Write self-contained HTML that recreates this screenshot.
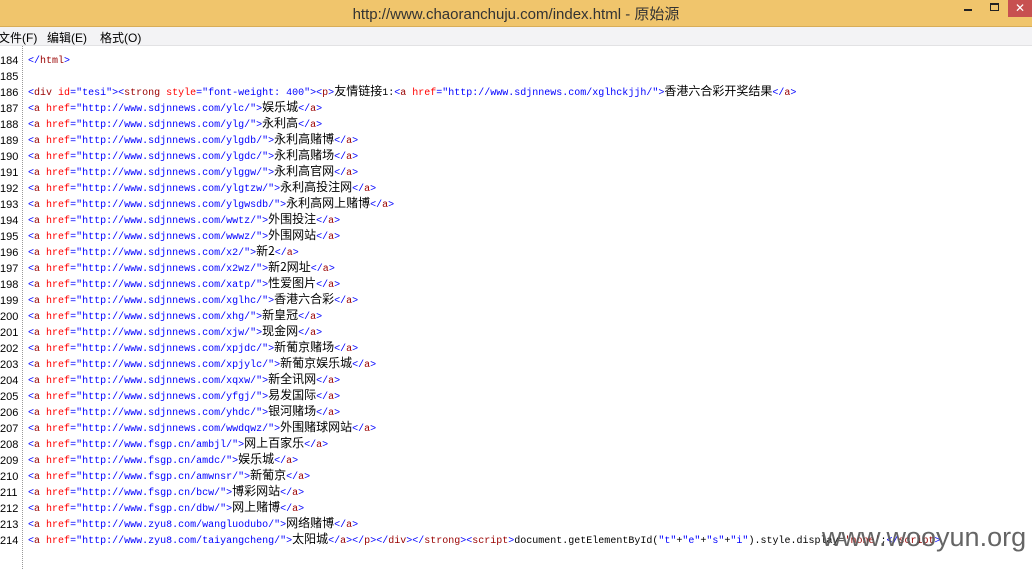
<!DOCTYPE html>
<html><head><meta charset="utf-8"><style>
body{margin:0;width:1032px;height:569px;overflow:hidden;background:#fff;position:relative;font-family:"Liberation Sans","Noto Sans CJK SC",sans-serif}
#tb{position:absolute;left:0;top:0;width:1032px;height:26px;background:#f0c56c;border-bottom:1px solid #d8ad58}
#title{position:absolute;left:0;width:1032px;top:3px;text-align:center;font-size:15px;color:#333}
#close{position:absolute;left:1008px;top:0;width:24px;height:17px;background:#c75050;color:#fff;font-size:12px;text-align:center;line-height:17px}
#min{position:absolute;left:964px;top:9px;width:8px;height:2px;background:#222}
#max{position:absolute;left:990px;top:3px;width:7px;height:5px;border:1px solid #222;border-top-width:2px}
#mb{position:absolute;left:0;top:27px;width:1032px;height:18px;background:#f3f3f5;border-bottom:1px solid #e2e2e4;font-size:12px;color:#000}
#mb span{position:absolute;top:2px}
#sep{position:absolute;left:22px;top:46px;height:523px;border-left:1px dotted #999}
.l{position:absolute;left:0;height:16px;font-family:"Liberation Mono","Noto Sans CJK SC",monospace;font-size:10px;white-space:pre;color:#000}
.n{position:absolute;left:0;top:2px;width:16px;height:16px;line-height:16px;text-align:right;font-family:"Liberation Sans",sans-serif;font-size:11px}
.c{position:absolute;left:28px;top:3px;height:16px;line-height:16px}
.c i{font-style:normal;font-family:"Noto Sans CJK SC",sans-serif;font-size:12px;line-height:10px}
b{font-weight:normal;color:#0000ff}
u{text-decoration:none;color:#990000}
s{text-decoration:none;color:#ff0000}
#wm{position:absolute;left:822px;top:522px;font-size:27px;color:#555;font-family:"Liberation Sans",sans-serif;opacity:.9}
</style></head><body>
<div id="tb"><div id="title">http://www.chaoranchuju.com/index.html - 原始源</div><div id="min"></div><div id="max"></div><div id="close">✕</div></div>
<div id="mb"><span style="left:-2px">文件(F)</span><span style="left:47px">编辑(E)</span><span style="left:100px">格式(O)</span></div>
<div id="sep"></div>
<div class="l" style="top:51px"><span class="n">184</span><span class="c"><b>&lt;/</b><u>html</u><b>&gt;</b></span></div>
<div class="l" style="top:67px"><span class="n">185</span></div>
<div class="l" style="top:83px"><span class="n">186</span><span class="c"><b>&lt;</b><u>div</u> <s>id</s><b>="tesi"&gt;&lt;</b><u>strong</u> <s>style</s><b>="font-weight: 400"&gt;&lt;</b><u>p</u><b>&gt;</b><i>友情链接</i>1:<b>&lt;</b><u>a</u> <s>href</s><b>="http://www.sdjnnews.com/xglhckjjh/"&gt;</b><i>香港六合彩开奖结果</i><b>&lt;/</b><u>a</u><b>&gt;</b></span></div>
<div class="l" style="top:99px"><span class="n">187</span><span class="c"><b>&lt;</b><u>a</u> <s>href</s><b>="http://www.sdjnnews.com/ylc/"&gt;</b><i>娱乐城</i><b>&lt;/</b><u>a</u><b>&gt;</b></span></div>
<div class="l" style="top:115px"><span class="n">188</span><span class="c"><b>&lt;</b><u>a</u> <s>href</s><b>="http://www.sdjnnews.com/ylg/"&gt;</b><i>永利高</i><b>&lt;/</b><u>a</u><b>&gt;</b></span></div>
<div class="l" style="top:131px"><span class="n">189</span><span class="c"><b>&lt;</b><u>a</u> <s>href</s><b>="http://www.sdjnnews.com/ylgdb/"&gt;</b><i>永利高赌博</i><b>&lt;/</b><u>a</u><b>&gt;</b></span></div>
<div class="l" style="top:147px"><span class="n">190</span><span class="c"><b>&lt;</b><u>a</u> <s>href</s><b>="http://www.sdjnnews.com/ylgdc/"&gt;</b><i>永利高赌场</i><b>&lt;/</b><u>a</u><b>&gt;</b></span></div>
<div class="l" style="top:163px"><span class="n">191</span><span class="c"><b>&lt;</b><u>a</u> <s>href</s><b>="http://www.sdjnnews.com/ylggw/"&gt;</b><i>永利高官网</i><b>&lt;/</b><u>a</u><b>&gt;</b></span></div>
<div class="l" style="top:179px"><span class="n">192</span><span class="c"><b>&lt;</b><u>a</u> <s>href</s><b>="http://www.sdjnnews.com/ylgtzw/"&gt;</b><i>永利高投注网</i><b>&lt;/</b><u>a</u><b>&gt;</b></span></div>
<div class="l" style="top:195px"><span class="n">193</span><span class="c"><b>&lt;</b><u>a</u> <s>href</s><b>="http://www.sdjnnews.com/ylgwsdb/"&gt;</b><i>永利高网上赌博</i><b>&lt;/</b><u>a</u><b>&gt;</b></span></div>
<div class="l" style="top:211px"><span class="n">194</span><span class="c"><b>&lt;</b><u>a</u> <s>href</s><b>="http://www.sdjnnews.com/wwtz/"&gt;</b><i>外围投注</i><b>&lt;/</b><u>a</u><b>&gt;</b></span></div>
<div class="l" style="top:227px"><span class="n">195</span><span class="c"><b>&lt;</b><u>a</u> <s>href</s><b>="http://www.sdjnnews.com/wwwz/"&gt;</b><i>外围网站</i><b>&lt;/</b><u>a</u><b>&gt;</b></span></div>
<div class="l" style="top:243px"><span class="n">196</span><span class="c"><b>&lt;</b><u>a</u> <s>href</s><b>="http://www.sdjnnews.com/x2/"&gt;</b><i>新2</i><b>&lt;/</b><u>a</u><b>&gt;</b></span></div>
<div class="l" style="top:259px"><span class="n">197</span><span class="c"><b>&lt;</b><u>a</u> <s>href</s><b>="http://www.sdjnnews.com/x2wz/"&gt;</b><i>新2网址</i><b>&lt;/</b><u>a</u><b>&gt;</b></span></div>
<div class="l" style="top:275px"><span class="n">198</span><span class="c"><b>&lt;</b><u>a</u> <s>href</s><b>="http://www.sdjnnews.com/xatp/"&gt;</b><i>性爱图片</i><b>&lt;/</b><u>a</u><b>&gt;</b></span></div>
<div class="l" style="top:291px"><span class="n">199</span><span class="c"><b>&lt;</b><u>a</u> <s>href</s><b>="http://www.sdjnnews.com/xglhc/"&gt;</b><i>香港六合彩</i><b>&lt;/</b><u>a</u><b>&gt;</b></span></div>
<div class="l" style="top:307px"><span class="n">200</span><span class="c"><b>&lt;</b><u>a</u> <s>href</s><b>="http://www.sdjnnews.com/xhg/"&gt;</b><i>新皇冠</i><b>&lt;/</b><u>a</u><b>&gt;</b></span></div>
<div class="l" style="top:323px"><span class="n">201</span><span class="c"><b>&lt;</b><u>a</u> <s>href</s><b>="http://www.sdjnnews.com/xjw/"&gt;</b><i>现金网</i><b>&lt;/</b><u>a</u><b>&gt;</b></span></div>
<div class="l" style="top:339px"><span class="n">202</span><span class="c"><b>&lt;</b><u>a</u> <s>href</s><b>="http://www.sdjnnews.com/xpjdc/"&gt;</b><i>新葡京赌场</i><b>&lt;/</b><u>a</u><b>&gt;</b></span></div>
<div class="l" style="top:355px"><span class="n">203</span><span class="c"><b>&lt;</b><u>a</u> <s>href</s><b>="http://www.sdjnnews.com/xpjylc/"&gt;</b><i>新葡京娱乐城</i><b>&lt;/</b><u>a</u><b>&gt;</b></span></div>
<div class="l" style="top:371px"><span class="n">204</span><span class="c"><b>&lt;</b><u>a</u> <s>href</s><b>="http://www.sdjnnews.com/xqxw/"&gt;</b><i>新全讯网</i><b>&lt;/</b><u>a</u><b>&gt;</b></span></div>
<div class="l" style="top:387px"><span class="n">205</span><span class="c"><b>&lt;</b><u>a</u> <s>href</s><b>="http://www.sdjnnews.com/yfgj/"&gt;</b><i>易发国际</i><b>&lt;/</b><u>a</u><b>&gt;</b></span></div>
<div class="l" style="top:403px"><span class="n">206</span><span class="c"><b>&lt;</b><u>a</u> <s>href</s><b>="http://www.sdjnnews.com/yhdc/"&gt;</b><i>银河赌场</i><b>&lt;/</b><u>a</u><b>&gt;</b></span></div>
<div class="l" style="top:419px"><span class="n">207</span><span class="c"><b>&lt;</b><u>a</u> <s>href</s><b>="http://www.sdjnnews.com/wwdqwz/"&gt;</b><i>外围赌球网站</i><b>&lt;/</b><u>a</u><b>&gt;</b></span></div>
<div class="l" style="top:435px"><span class="n">208</span><span class="c"><b>&lt;</b><u>a</u> <s>href</s><b>="http://www.fsgp.cn/ambjl/"&gt;</b><i>网上百家乐</i><b>&lt;/</b><u>a</u><b>&gt;</b></span></div>
<div class="l" style="top:451px"><span class="n">209</span><span class="c"><b>&lt;</b><u>a</u> <s>href</s><b>="http://www.fsgp.cn/amdc/"&gt;</b><i>娱乐城</i><b>&lt;/</b><u>a</u><b>&gt;</b></span></div>
<div class="l" style="top:467px"><span class="n">210</span><span class="c"><b>&lt;</b><u>a</u> <s>href</s><b>="http://www.fsgp.cn/amwnsr/"&gt;</b><i>新葡京</i><b>&lt;/</b><u>a</u><b>&gt;</b></span></div>
<div class="l" style="top:483px"><span class="n">211</span><span class="c"><b>&lt;</b><u>a</u> <s>href</s><b>="http://www.fsgp.cn/bcw/"&gt;</b><i>博彩网站</i><b>&lt;/</b><u>a</u><b>&gt;</b></span></div>
<div class="l" style="top:499px"><span class="n">212</span><span class="c"><b>&lt;</b><u>a</u> <s>href</s><b>="http://www.fsgp.cn/dbw/"&gt;</b><i>网上赌博</i><b>&lt;/</b><u>a</u><b>&gt;</b></span></div>
<div class="l" style="top:515px"><span class="n">213</span><span class="c"><b>&lt;</b><u>a</u> <s>href</s><b>="http://www.zyu8.com/wangluodubo/"&gt;</b><i>网络赌博</i><b>&lt;/</b><u>a</u><b>&gt;</b></span></div>
<div class="l" style="top:531px"><span class="n">214</span><span class="c"><b>&lt;</b><u>a</u> <s>href</s><b>="http://www.zyu8.com/taiyangcheng/"&gt;</b><i>太阳城</i><b>&lt;/</b><u>a</u><b>&gt;&lt;/</b><u>p</u><b>&gt;&lt;/</b><u>div</u><b>&gt;&lt;/</b><u>strong</u><b>&gt;&lt;</b><u>script</u><b>&gt;</b>document.getElementById(<b>"t"</b>+<b>"e"</b>+<b>"s"</b>+<b>"i"</b>).style.display=<u>'none'</u>;<b>&lt;/</b><u>script</u><b>&gt;</b></span></div>
<div id="wm">www.wooyun.org</div>
</body></html>
